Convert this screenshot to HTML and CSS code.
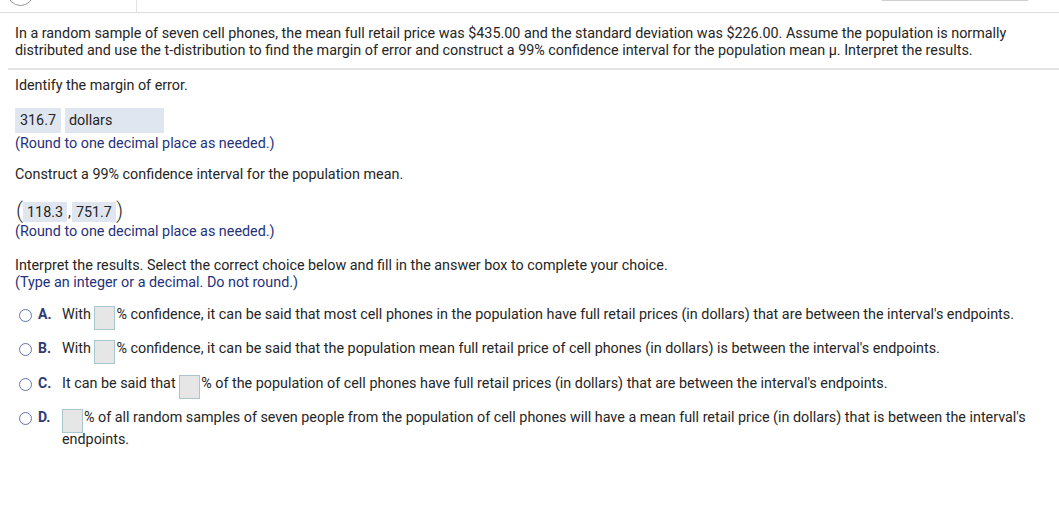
FILE: index.html
```html
<!DOCTYPE html>
<html>
<head>
<meta charset="utf-8">
<link rel="stylesheet" href="styles.css">
</head>
<body>
<div class="topbar">
  <div class="left-cell"><span class="circle"></span></div>
  <div class="spacer"></div>
  <div class="tab-box"></div>
</div>
<div class="question">
  <p>In a random sample of seven cell phones, the mean full retail price was $435.00 and the standard deviation was $226.00. Assume the population is normally distributed and use the t-distribution to find the margin of error and construct a 99% confidence interval for the population mean μ. Interpret the results.</p>
</div>
<div class="work">
  <p class="step">Identify the margin of error.</p>
  <div class="answer-row">
    <span class="ans">316.7</span><span class="ans unit">dollars</span>
  </div>
  <p class="hint">(Round to one decimal place as needed.)</p>
  <p class="step s2">Construct a 99% confidence interval for the population mean.</p>
  <div class="interval">
    <span class="paren">(</span><span class="ans sm">118.3</span><span class="comma">,</span><span class="ans sm">751.7</span><span class="paren">)</span>
  </div>
  <p class="hint h2">(Round to one decimal place as needed.)</p>
  <p class="step s3">Interpret the results. Select the correct choice below and fill in the answer box to complete your choice.</p>
  <p class="hint h3">(Type an integer or a decimal. Do not round.)</p>
  <div class="choices">
    <div class="choice">
      <span class="radio"></span><span class="letter">A.</span>
      <span class="ctext">With <span class="box"></span>% confidence, it can be said that most cell phones in the population have full retail prices (in dollars) that are between the interval's endpoints.</span>
    </div>
    <div class="choice">
      <span class="radio"></span><span class="letter">B.</span>
      <span class="ctext">With <span class="box"></span>% confidence, it can be said that the population mean full retail price of cell phones (in dollars) is between the interval's endpoints.</span>
    </div>
    <div class="choice">
      <span class="radio"></span><span class="letter">C.</span>
      <span class="ctext">It can be said that <span class="box"></span>% of the population of cell phones have full retail prices (in dollars) that are between the interval's endpoints.</span>
    </div>
    <div class="choice">
      <span class="radio"></span><span class="letter">D.</span>
      <span class="ctext"><span class="box"></span>% of all random samples of seven people from the population of cell phones will have a mean full retail price (in dollars) that is between the interval's endpoints.</span>
    </div>
  </div>
</div>
</body>
</html>
```

FILE: styles.css
```css
* { box-sizing: border-box; }
html, body { margin: 0; padding: 0; background: #fff; }
body {
  font-family: Roboto, "Liberation Sans", sans-serif;
  font-size: 14.35px;
  color: #252525;
  width: 1059px;
  height: 518px;
  overflow: hidden;
}
p { margin: 0; }

.topbar {
  display: flex;
  height: 13px;
  border-bottom: 1px solid #dcdcdc;
  overflow: hidden;
}
.left-cell {
  width: 137px;
  border-right: 1px solid #e2e2e2;
  padding-left: 7px;
}
.circle {
  display: block;
  width: 27px;
  height: 27px;
  margin-top: -21px;
  border: 1.5px solid #9a9a9a;
  border-radius: 50%;
}
.spacer { flex: 1; }
.tab-box {
  width: 150px;
  height: 7px;
  margin-right: 29px;
  margin-top: -6px;
  border: 1px solid #cfcfcf;
  border-radius: 3px;
  background: #fafafa;
}

.question {
  margin-left: 8px;
  padding: 12px 0 9px 7px;
  border-bottom: 2px solid #e3e3e3;
  line-height: 17px;
}

.work { padding: 7px 15px 0 15px; line-height: 17px; }

.answer-row {
  display: flex;
  gap: 4px;
  margin-top: 14px;
  height: 25px;
}
.ans {
  background: #dfe6f0;
  padding: 0 5px;
  display: flex;
  align-items: center;
  color: #252525;
}
.unit { width: 99px; padding: 0 4px; }

.hint { color: #25327a; margin-top: 2px; }
.s2 { margin-top: 14px; }

.interval {
  display: flex;
  align-items: center;
  margin-top: 18px;
  height: 22px;
  padding-left: 1px;
}
.paren { font-size: 22px; font-weight: 300; line-height: 22px; color: #333; margin-top: -2px; }
.ans.sm { height: 20px; padding: 0 4px; }
.comma { padding: 0 1px; }
.h2 { margin-top: 0; }
.s3 { margin-top: 17px; }
.h3 { margin-top: 0; }

.choices { margin-top: 12.5px; }
.choice {
  display: flex;
  align-items: flex-start;
  line-height: 22px;
  margin-bottom: 12.5px;
}
.radio {
  flex: none;
  width: 13px;
  height: 13px;
  border: 1.5px solid #6475ae;
  border-radius: 50%;
  margin: 5px 6px 0 4px;
}
.letter {
  flex: none;
  width: 24px;
  font-weight: bold;
  color: #2e3a78;
  font-size: 14px;
  line-height: 20px;
}
.ctext { flex: 1; }
.box {
  display: inline-block;
  width: 21px;
  height: 24px;
  vertical-align: -7px;
  background: #e6e6e6;
  border: 1px solid #a9c6cf;
  margin: -4px 1px -4px 0;
}
```
